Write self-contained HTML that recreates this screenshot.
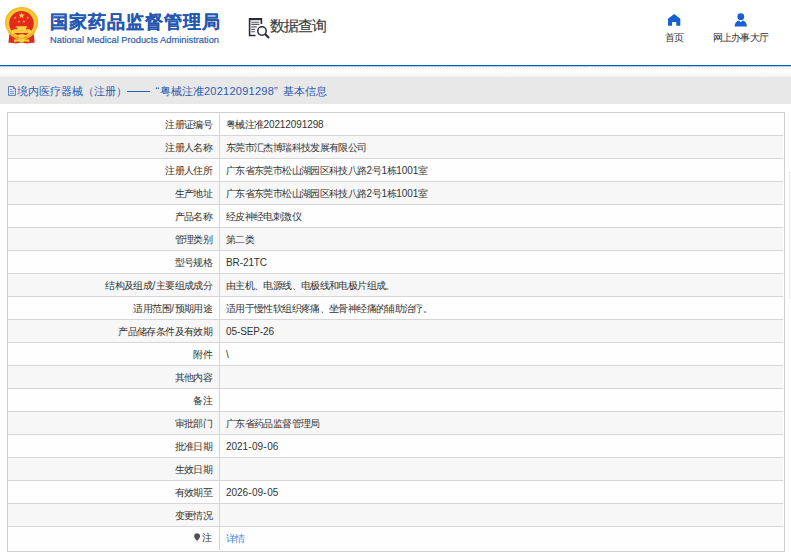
<!DOCTYPE html>
<html><head><meta charset="utf-8">
<style>
*{margin:0;padding:0;box-sizing:border-box}
html,body{width:791px;height:556px;overflow:hidden;background:#fff}
body{font-family:"Liberation Sans",sans-serif;position:relative}
.abs{position:absolute;white-space:nowrap}
#title{left:50px;top:10px;font-size:18px;letter-spacing:0.95px;font-weight:bold;color:#2658b2;-webkit-text-stroke:0.15px #2658b2;line-height:24px}
#en{left:50px;top:34px;font-size:9.3px;color:#2f5db0;-webkit-text-stroke:0.2px #2f5db0;line-height:12px}
#sq{left:269.5px;top:16px;font-size:15px;letter-spacing:-0.9px;color:#3a3a3a;-webkit-text-stroke:0.15px #3a3a3a;line-height:20px}
.nav{font-size:10px;color:#333;letter-spacing:-0.72px;line-height:12px}
#line{left:0;top:65px;width:791px;height:1px;background:#0a5ac4;box-shadow:0 1px 0 rgba(10,90,196,0.3)}
#hatch{left:0;top:67px;width:791px;height:2px;background:repeating-linear-gradient(135deg,#fff 0,#fff 1.4px,#e6e6e6 1.4px,#e6e6e6 2.1px)}
#grad{left:0;top:70px;width:791px;height:7px;background:linear-gradient(#fff,#f4f4f4)}
#bar{left:0;top:77px;width:791px;height:27px;background:#e8e8e8}
.crumb{top:84px;font-size:11px;color:#2a5cb5;line-height:14px}
#tbl{left:7px;top:112px;width:778px;height:440px;border:1px solid #cfcfcf}
.r{width:775px;height:23px;border-bottom:1px solid #d6d6d6;background:#fdfefd;position:relative;font-size:10px;letter-spacing:-0.63px;color:#333;line-height:23px}
.r.g{background:#f7f7f7}
.r.last{border-bottom:none;height:24px}
.k{position:absolute;left:0;top:0;width:212px;height:22px;border-right:1px solid #d6d6d6;text-align:right;padding-right:7px}
.r.last .k{height:23px;padding-right:8px;line-height:22.5px}
.v{position:absolute;left:212px;top:0;padding-left:6px}
.n{letter-spacing:-0.1px}
.sl{letter-spacing:0.4px;margin-left:0.4px}
.hy{letter-spacing:0.6px;margin-left:0.3px}
.lnk{color:#3584e4}
.pin{vertical-align:-1px;margin-right:0.8px}
</style></head><body>
<svg class="abs" style="left:0;top:0" width="45" height="48" viewBox="0 0 45 48">
  <path d="M9.6 32 L8.4 42.8 Q12.5 42.3 15.5 43.6 L21.6 42.6 L27.7 43.6 Q30.7 42.3 34.6 42.8 L33.6 32 Z" fill="#dc2a1c"/>
  <ellipse cx="21.6" cy="22.4" rx="16.6" ry="15.5" fill="#efb826"/>
  <ellipse cx="21.6" cy="22.6" rx="15.2" ry="14.2" fill="#f6cc36"/>
  <circle cx="21.45" cy="23.4" r="12.3" fill="#e52a1d"/>
  <path d="M21.6 12.1l0.8 2.3h2.5l-2 1.5 0.8 2.4-2.1-1.5-2.1 1.5 0.8-2.4-2-1.5h2.5z" fill="#f7d13b"/>
  <path d="M15.2 16.4l0.35 0.9h1l-0.8 0.6 0.3 1-0.85-0.6-0.85 0.6 0.3-1-0.8-0.6h1z" fill="#f7d13b"/>
  <path d="M27.7 16.4l0.35 0.9h1l-0.8 0.6 0.3 1-0.85-0.6-0.85 0.6 0.3-1-0.8-0.6h1z" fill="#f7d13b"/>
  <path d="M19 20.2l0.35 0.9h1l-0.8 0.6 0.3 1-0.85-0.6-0.85 0.6 0.3-1-0.8-0.6h1z" fill="#f7d13b"/>
  <path d="M23.9 20.2l0.35 0.9h1l-0.8 0.6 0.3 1-0.85-0.6-0.85 0.6 0.3-1-0.8-0.6h1z" fill="#f7d13b"/>
  <path d="M16.2 26.3 H26.8 L27.8 27.6 H15.2 Z M17.2 27.6 H26 V29.3 H17.2 Z M13.8 29.3 H29.4 L30.2 30.1 H13 Z M11.8 30.1 H31.3 V32.9 H11.8 Z" fill="#f6d444"/>
  <path d="M12.6 30.9 H30.6" stroke="#eab42a" stroke-width="0.4"/>
  <path d="M7.5 30.5 Q14 38.2 21.6 38.2 Q29.2 38.2 35.7 30.5 L35 33 Q29 39.6 21.6 39.6 Q14.2 39.6 8.2 33 Z" fill="#f2c12b"/>
  <ellipse cx="21.6" cy="36" rx="3.3" ry="1.9" fill="#f6d444"/>
  <path d="M13.8 39.6 Q21.6 38.3 29.4 39.6 L29.2 41.8 Q21.6 40.6 14 41.8 Z" fill="#f4cc36"/>
  <path d="M14 40 L15.6 40.4 L15.2 43 Z M29.2 40 L27.6 40.4 L28 43 Z" fill="#f4cc36"/>
  <ellipse cx="21.6" cy="40.6" rx="3.1" ry="1.6" fill="#f7d64a"/>
</svg>
<div id="title" class="abs">国家药品监督管理局</div>
<div id="en" class="abs">National Medical Products Administration</div>
<svg class="abs" style="left:247px;top:16px" width="24" height="24" viewBox="0 0 24 24">
  <path d="M8.5 19.5H2.6V2.9H14.4V8" fill="none" stroke="#2b2b3b" stroke-width="1.6"/>
  <path d="M2 2.6h13v1.6H2z" fill="#2b2b3b"/>
  <path d="M4.2 6.2h8.2M4.2 8.4h8.2M4.2 10.9h5.6M4.2 13.4h4M4.2 15.8h4" stroke="#5a5a66" stroke-width="1.1"/>
  <circle cx="15" cy="15" r="4.2" fill="none" stroke="#2b2b3b" stroke-width="1.5"/>
  <path d="M18 18l4 4" stroke="#2b2b3b" stroke-width="2.2"/>
</svg>
<div id="sq" class="abs">数据查询</div>
<svg class="abs" style="left:668px;top:14px" width="13" height="12" viewBox="0 0 13 12">
  <path d="M6.2 0L12.3 4.8V11.8H8.3V8H4.1V11.8H0V4.8Z" fill="#1560d4"/>
</svg>
<div class="abs nav" style="left:665px;top:31.5px">首页</div>
<svg class="abs" style="left:734px;top:12px" width="14" height="15" viewBox="0 0 14 15">
  <circle cx="6.8" cy="4.7" r="3.4" fill="#1560d4"/>
  <path d="M0.6 14.6C0.9 10.5 3 8.8 5 8.4L6.8 10.3 8.6 8.4C10.6 8.8 12.7 10.5 13 14.6Z" fill="#1560d4"/>
</svg>
<div class="abs nav" style="left:712.5px;top:31.5px">网上办事大厅</div>
<div id="line" class="abs"></div>
<div id="hatch" class="abs"></div>
<div id="grad" class="abs"></div>
<div id="bar" class="abs"></div>
<svg class="abs" style="left:7px;top:85px" width="10" height="12" viewBox="0 0 10 12">
  <path d="M1.5 1.5H6.3L8.4 3.6V10.4H1.5Z M6.3 1.5V3.6H8.4" fill="none" stroke="#3d6cc6" stroke-width="0.85"/>
  <path d="M3 4.5H5 M3 6.5H7 M3 8.4H7" stroke="#6a88d0" stroke-width="0.85"/>
</svg>
<div class="abs crumb" style="left:17px">境内医疗器械（注册）</div>
<div class="abs" style="left:127px;top:91px;width:23px;height:1px;background:#2a5cb5"></div>
<div class="abs crumb" style="left:155.5px">“</div>
<div class="abs crumb" style="left:160px">粤械注准<span style="letter-spacing:0.25px">20212091298</span></div>
<div class="abs crumb" style="left:274px">”</div>
<div class="abs crumb" style="left:283px">基本信息</div>
<div class="abs" style="left:789px;top:172px;width:10px;height:126px;border:1px solid #e9ebf0;background:#fff;box-shadow:0 0 2px rgba(0,0,0,0.04)"></div>
<div id="tbl" class="abs">
<div class="r "><div class="k">注册证编号</div><div class="v">粤械注准<span class="n">20212091298</span></div></div>
<div class="r g"><div class="k">注册人名称</div><div class="v">东莞市汇杰博瑞科技发展有限公司</div></div>
<div class="r "><div class="k">注册人住所</div><div class="v">广东省东莞市松山湖园区科技八路<span class="n">2</span>号<span class="n">1</span>栋<span class="n">1001</span>室</div></div>
<div class="r g"><div class="k">生产地址</div><div class="v">广东省东莞市松山湖园区科技八路<span class="n">2</span>号<span class="n">1</span>栋<span class="n">1001</span>室</div></div>
<div class="r "><div class="k">产品名称</div><div class="v">经皮神经电刺激仪</div></div>
<div class="r g"><div class="k">管理类别</div><div class="v">第二类</div></div>
<div class="r "><div class="k">型号规格</div><div class="v"><span class="n">BR-21TC</span></div></div>
<div class="r g"><div class="k">结构及组成<span class="sl">/</span>主要组成成分</div><div class="v">由主机、电源线、电极线和电极片组成。</div></div>
<div class="r "><div class="k">适用范围<span class="sl">/</span>预期用途</div><div class="v">适用于慢性软组织疼痛、坐骨神经痛的辅助治疗。</div></div>
<div class="r g"><div class="k">产品储存条件及有效期</div><div class="v"><span class="n">05-SEP-26</span></div></div>
<div class="r "><div class="k">附件</div><div class="v"><span class="n">\</span></div></div>
<div class="r g"><div class="k">其他内容</div><div class="v"></div></div>
<div class="r "><div class="k">备注</div><div class="v"></div></div>
<div class="r g"><div class="k">审批部门</div><div class="v">广东省药品监督管理局</div></div>
<div class="r "><div class="k">批准日期</div><div class="v"><span class="n">2021<span class="hy">-</span>09<span class="hy">-</span>06</span></div></div>
<div class="r g"><div class="k">生效日期</div><div class="v"></div></div>
<div class="r "><div class="k">有效期至</div><div class="v"><span class="n">2026<span class="hy">-</span>09<span class="hy">-</span>05</span></div></div>
<div class="r g"><div class="k">变更情况</div><div class="v"></div></div>
<div class="r last"><div class="k"><svg class="pin" width="7" height="9" viewBox="0 0 7 9"><path d="M3.1 0.2C1.4 0.2 0.1 1.5 0.1 3.2c0 1.3 0.8 2 1.4 2.8L2.2 7.2H4L4.7 6C5.3 5.2 6.1 4.5 6.1 3.2 6.1 1.5 4.8 0.2 3.1 0.2z" fill="#505058"/><path d="M2.3 7.4H3.9V8.6H2.3z" fill="#9a9aa0"/></svg>注</div><div class="v"><span class="lnk">详情</span></div></div>
</div>
</body></html>
